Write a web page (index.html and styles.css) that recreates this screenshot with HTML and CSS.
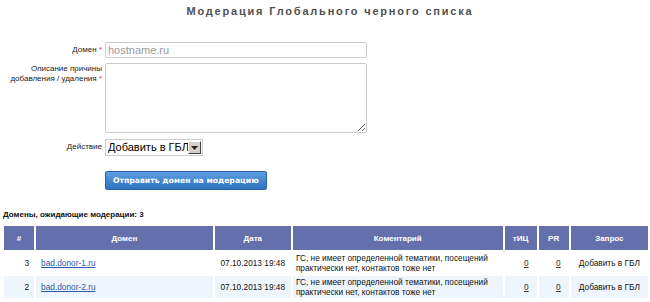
FILE: index.html
```html
<!DOCTYPE html>
<html lang="ru">
<head>
	<meta charset="UTF-8">
	<title>Модерация Глобального черного списка</title>
	<link rel="stylesheet" href="styles.css">
</head>
<body>
	<h1 class="title">Модерация Глобального черного списка</h1>
	<form class="mod-form">
		<label class="lbl" for="domain">Домен <span class="req">*</span></label>
		<input class="field" type="text" id="domain" placeholder="hostname.ru">

		<label class="lbl lbl-top" for="reason">Описание причины<br>добавления / удаления <span class="req">*</span></label>
		<textarea class="area" id="reason"></textarea>

		<label class="lbl" for="action">Действие</label>
		<div class="select-wrap">
			<select class="sel" id="action">
				<option>Добавить в ГБЛ</option>
				<option>Удалить из ГБЛ</option>
			</select>
			<span class="sel-btn">
				<svg width="7" height="4" viewBox="0 0 7 4"><path d="M0 0h7L3.5 4z" fill="#222"/></svg>
			</span>
		</div>

		<span></span>
		<div class="submit-row">
			<button class="btn" type="submit">Отправить домен на модерацию</button>
		</div>
	</form>

	<p class="count">Домены, ожидающие модерации: 3</p>

	<table class="queue">
		<colgroup>
			<col class="w-num">
			<col class="w-dom">
			<col class="w-date">
			<col class="w-com">
			<col class="w-tic">
			<col class="w-pr">
			<col class="w-req">
		</colgroup>
		<thead>
			<tr>
				<th>#</th>
				<th>Домен</th>
				<th>Дата</th>
				<th>Коментарий</th>
				<th>тИЦ</th>
				<th>PR</th>
				<th>Запрос</th>
			</tr>
		</thead>
		<tbody>
			<tr>
				<td class="c-num">3</td>
				<td class="c-dom"><a href="#">bad.donor-1.ru</a></td>
				<td class="c-date">07.10.2013 19:48</td>
				<td class="c-com">ГС, не имеет определенной тематики, посещений практически нет, контактов тоже нет</td>
				<td class="c-num c-zero"><a class="zero" href="#">0</a></td>
				<td class="c-num c-zero"><a class="zero" href="#">0</a></td>
				<td class="c-req">Добавить в ГБЛ</td>
			</tr>
			<tr class="alt">
				<td class="c-num">2</td>
				<td class="c-dom"><a href="#">bad.donor-2.ru</a></td>
				<td class="c-date">07.10.2013 19:48</td>
				<td class="c-com">ГС, не имеет определенной тематики, посещений практически нет, контактов тоже нет</td>
				<td class="c-num c-zero"><a class="zero" href="#">0</a></td>
				<td class="c-num c-zero"><a class="zero" href="#">0</a></td>
				<td class="c-req">Добавить в ГБЛ</td>
			</tr>
			<tr>
				<td class="c-num">1</td>
				<td class="c-dom"><a href="#">bad.donor-3.ru</a></td>
				<td class="c-date">07.10.2013 19:48</td>
				<td class="c-com">ГС, не имеет определенной тематики, посещений практически нет, контактов тоже нет</td>
				<td class="c-num c-zero"><a class="zero" href="#">0</a></td>
				<td class="c-num c-zero"><a class="zero" href="#">0</a></td>
				<td class="c-req">Добавить в ГБЛ</td>
			</tr>
		</tbody>
	</table>
</body>
</html>
```

FILE: styles.css
```css
body {
	margin: 0;
	padding: 0 2px;
	font-family: "Liberation Sans", Arial, sans-serif;
	font-size: 8px;
	color: #000;
	background: #fff;
}

.title {
	margin: 3px 0 0;
	padding-left: 10px;
	text-align: center;
	font-size: 11px;
	font-weight: bold;
	letter-spacing: 1.8px;
	color: #505050;
	line-height: 16px;
}

.mod-form {
	display: grid;
	grid-template-columns: 100px 262px;
	column-gap: 3px;
	row-gap: 4px;
	margin-top: 23px;
	align-items: center;
}

.lbl {
	text-align: right;
	color: #222;
	line-height: 10px;
}

.lbl-top {
	align-self: start;
	padding-top: 2px;
	line-height: 10px;
}

.req {
	color: #d33;
}

.field,
.area {
	box-sizing: border-box;
	width: 262px;
	margin: 0;
	border: 1px solid #ccc;
	border-radius: 2px;
	font-family: "Liberation Sans", Arial, sans-serif;
	font-size: 11px;
	padding: 0 2px;
}

.field {
	height: 16px;
	color: #333;
}

.field::placeholder {
	color: #999;
}

.area {
	height: 70px;
	resize: vertical;
	margin-top: 1px;
}

.select-wrap {
	display: flex;
	width: 98px;
	height: 17px;
	box-sizing: border-box;
	border: 1px solid #ccc;
	background: #fff;
	align-items: center;
	margin-top: 2px;
}

.sel {
	appearance: none;
	-webkit-appearance: none;
	border: 0;
	background: transparent;
	font-family: "Liberation Sans", Arial, sans-serif;
	font-size: 11px;
	color: #000;
	padding: 0 0 0 2px;
	margin: 0;
	width: 82px;
	height: 15px;
	line-height: 15px;
	outline: none;
}

.sel-btn {
	display: flex;
	align-items: center;
	justify-content: center;
	width: 13px;
	height: 13px;
	margin-left: auto;
	margin-right: 1px;
	background: #d4d0c8;
	border: 1px solid;
	border-color: #fff #404040 #404040 #fff;
	box-sizing: border-box;
}

.submit-row {
	padding-top: 11px;
}

.btn {
	height: 19px;
	padding: 0 7px;
	border: 1px solid #2d62a3;
	border-radius: 2px;
	background: linear-gradient(#5b9ee0, #2f72c0);
	color: #fff;
	font-family: "DejaVu Sans", Verdana, sans-serif;
	font-size: 7.7px;
	font-weight: bold;
	line-height: 17px;
	cursor: pointer;
}

.count {
	margin: 20px 0 0 1px;
	font-weight: bold;
	color: #111;
}

.queue {
	width: 648px;
	margin-top: 5px;
	table-layout: fixed;
	border-collapse: separate;
	border-spacing: 2px;
	font-size: 8.3px;
}

.w-num { width: 30px; }
.w-dom { width: 176px; }
.w-date { width: 76px; }
.w-com { width: 209px; }
.w-tic { width: 32px; }
.w-pr { width: 30px; }
.w-req { width: 77px; }

.queue th {
	height: 24px;
	padding: 0;
	background: #6470ab;
	color: #fff;
	font-size: 8px;
	font-weight: bold;
	text-align: center;
}

.queue td {
	height: 22px;
	padding: 0 5px;
	vertical-align: middle;
	color: #111;
	line-height: 10px;
}

.queue .alt td {
	background: #eef5fc;
}

.queue td.c-num {
	text-align: right;
	padding-right: 5px;
}

.queue td.c-zero {
	padding-right: 8px;
}

.queue td.c-date,
.queue td.c-req {
	text-align: center;
}

.queue td.c-com {
	padding: 0 3px;
}

.queue a {
	color: #2a58a8;
}

.queue a.zero {
	color: #333;
}
```
